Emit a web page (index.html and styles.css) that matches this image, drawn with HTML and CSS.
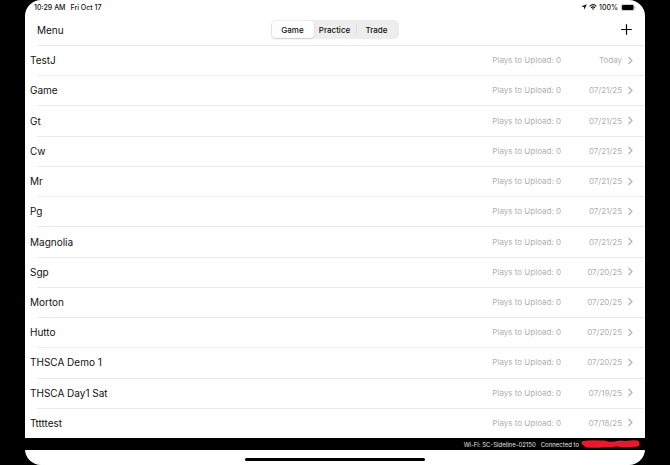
FILE: index.html
```html
<!DOCTYPE html>
<html lang="en">
  <head>
    <meta charset="UTF-8" />
    <meta name="viewport" content="width=device-width, initial-scale=1.0" />
    <title>Games</title>
    <link rel="stylesheet" href="styles.css">
  </head>
  <body>
    <svg class="sprite" width="0" height="0" aria-hidden="true">
      <symbol id="chevron" viewBox="0 0 6 9">
        <path d="M1.5 1 L5 4.5 L1.5 8" fill="none" stroke="currentColor" stroke-width="1.2" />
      </symbol>
    </svg>

    <div class="screen">
      <div class="status-bar">
        <span>10:29 AM</span>
        <span>Fri Oct 17</span>
        <div class="status-icons">
          <svg width="6" height="6" viewBox="0 0 6 6"><path d="M5.8 0.2 L3.4 5.8 L3 3 L0.2 2.6 Z" fill="#111" /></svg>
          <svg width="8" height="6" viewBox="0 0 8 6">
            <path d="M0.6 2.3 Q4 -0.9 7.4 2.3 M2 3.8 Q4 1.9 6 3.8" fill="none" stroke="#111" stroke-width="1.1" />
            <path d="M2.9 4.7 Q4 3.8 5.1 4.7 L4 5.9 Z" fill="#111" />
          </svg>
          <span>100%</span>
          <svg class="battery" width="15" height="7" viewBox="0 0 15 7">
            <rect x="0.3" y="0.3" width="12.9" height="6.4" rx="1.8" fill="none" stroke="#999" stroke-width="0.6" />
            <rect x="1" y="1" width="11.5" height="5" rx="1.2" fill="#000" />
            <path d="M14 2.4 Q15 3.5 14 4.6 Z" fill="#999" />
          </svg>
        </div>
      </div>

      <header class="nav-bar">
        <button class="menu-button" type="button">Menu</button>
        <div class="segments">
          <button class="segment selected" type="button" aria-pressed="true">Game</button>
          <button class="segment" type="button" aria-pressed="false">Practice</button>
          <button class="segment divided" type="button" aria-pressed="false">Trade</button>
        </div>
        <button class="add-button" type="button" aria-label="Add">
          <svg width="11" height="11" viewBox="0 0 11 11"><path d="M5.5 0.2 V10.8 M0.2 5.5 H10.8" stroke="#000" stroke-width="1.2" /></svg>
        </button>
      </header>

      <main class="game-list">
        <a class="game" href="#"><span class="name">TestJ</span><span class="plays">Plays to Upload: 0</span><span class="date">Today</span><svg class="chevron"><use href="#chevron" /></svg></a>
        <a class="game" href="#"><span class="name">Game</span><span class="plays">Plays to Upload: 0</span><span class="date">07/21/25</span><svg class="chevron"><use href="#chevron" /></svg></a>
        <a class="game" href="#"><span class="name">Gt</span><span class="plays">Plays to Upload: 0</span><span class="date">07/21/25</span><svg class="chevron"><use href="#chevron" /></svg></a>
        <a class="game" href="#"><span class="name">Cw</span><span class="plays">Plays to Upload: 0</span><span class="date">07/21/25</span><svg class="chevron"><use href="#chevron" /></svg></a>
        <a class="game" href="#"><span class="name">Mr</span><span class="plays">Plays to Upload: 0</span><span class="date">07/21/25</span><svg class="chevron"><use href="#chevron" /></svg></a>
        <a class="game" href="#"><span class="name">Pg</span><span class="plays">Plays to Upload: 0</span><span class="date">07/21/25</span><svg class="chevron"><use href="#chevron" /></svg></a>
        <a class="game" href="#"><span class="name">Magnolia</span><span class="plays">Plays to Upload: 0</span><span class="date">07/21/25</span><svg class="chevron"><use href="#chevron" /></svg></a>
        <a class="game" href="#"><span class="name">Sgp</span><span class="plays">Plays to Upload: 0</span><span class="date">07/20/25</span><svg class="chevron"><use href="#chevron" /></svg></a>
        <a class="game" href="#"><span class="name">Morton</span><span class="plays">Plays to Upload: 0</span><span class="date">07/20/25</span><svg class="chevron"><use href="#chevron" /></svg></a>
        <a class="game" href="#"><span class="name">Hutto</span><span class="plays">Plays to Upload: 0</span><span class="date">07/20/25</span><svg class="chevron"><use href="#chevron" /></svg></a>
        <a class="game" href="#"><span class="name">THSCA Demo 1</span><span class="plays">Plays to Upload: 0</span><span class="date">07/20/25</span><svg class="chevron"><use href="#chevron" /></svg></a>
        <a class="game" href="#"><span class="name">THSCA Day1 Sat</span><span class="plays">Plays to Upload: 0</span><span class="date">07/19/25</span><svg class="chevron"><use href="#chevron" /></svg></a>
        <a class="game" href="#"><span class="name">Tttttest</span><span class="plays">Plays to Upload: 0</span><span class="date">07/18/25</span><svg class="chevron"><use href="#chevron" /></svg></a>
      </main>

      <footer class="connection">
        <span>Wi-Fi: SC-Sideline-02150</span>
        <span>Connected to</span>
        <svg class="redacted" width="59" height="8" viewBox="0 0 59 8">
          <path d="M2 1 Q10 -0.3 20 0.6 Q25 0 27 1.6 Q33 2.2 36 1 Q40 0.2 44 1 Q50 0 57 0.4 Q59.5 3 58 6 Q54 7.6 46 6.9 Q42 7.6 36 6.6 Q32 7 24 7.3 Q14 8.2 6 7.5 Q3 7 3 5.6 Q-0.5 4 0.4 2 Z" fill="#e8192c" />
        </svg>
      </footer>
      <div class="home-area"><div class="home-bar"></div></div>
    </div>
  </body>
</html>
```
FILE: styles.css
```css
* {
  box-sizing: border-box;
}
body {
  margin: 0;
  padding: 0 25px;
  background: #000;
  color: #111;
  font-family: Inter, "Liberation Sans", sans-serif;
  font-size: 10px;
}
button {
  padding: 0;
  border: 0;
  background: none;
  color: inherit;
  font: inherit;
}
.sprite {
  position: absolute;
}
.screen {
  display: flex;
  flex-direction: column;
  min-height: 100vh;
  border-radius: 16px;
  background: #fff;
  overflow: hidden;
}
.status-bar {
  display: flex;
  align-items: center;
  gap: 5px;
  height: 14px;
  padding: 0 9px;
  font-size: 7px;
  font-weight: 500;
}
.status-icons {
  display: flex;
  align-items: center;
  gap: 2px;
  margin-left: auto;
}
.battery {
  margin-left: 1px;
}
.nav-bar {
  display: grid;
  grid-template-columns: 1fr auto 1fr;
  align-items: center;
  height: 31px;
  padding: 0 13px 0 12px;
}
.menu-button {
  justify-self: start;
}
.add-button {
  display: flex;
  justify-self: end;
}
.segments {
  display: grid;
  grid-template-columns: repeat(3, 1fr);
  width: 128px;
  height: 19px;
  padding: 1px;
  border-radius: 5px;
  background: #ededee;
  font-size: 8px;
  font-weight: 500;
}
.segment {
  border-radius: 4px;
}
.segment.selected {
  background: #fff;
  box-shadow: 0 1px 2px rgba(0, 0, 0, 0.15);
}
.segment.divided {
  background: linear-gradient(#dcdcde, #dcdcde) no-repeat left center / 1px 11px;
}
.game-list {
  display: flex;
  flex: 1;
  flex-direction: column;
}
.game {
  display: flex;
  flex: 1;
  align-items: center;
  padding: 0 12px 0 5px;
  background: linear-gradient(#ebebeb, #ebebeb) no-repeat 12px 0 / 100% 1px;
  color: inherit;
  text-decoration: none;
}
.name {
  flex: 1;
}
.plays,
.date {
  color: #b0b0b0;
  font-size: 8px;
}
.date {
  width: 61px;
  text-align: right;
}
.chevron {
  width: 6px;
  height: 9px;
  margin-left: 5px;
  color: #b0b0b0;
}
.connection {
  display: flex;
  align-items: center;
  justify-content: flex-end;
  height: 12px;
  padding-right: 5px;
  background: #000;
  color: #e4e4e4;
  font-size: 6px;
}
.connection span {
  margin-left: 5px;
}
.redacted {
  margin-left: 2px;
}
.home-area {
  display: flex;
  align-items: center;
  justify-content: center;
  height: 15px;
  padding-top: 3px;
}
.home-bar {
  width: 29%;
  height: 3px;
  border-radius: 2px;
  background: #000;
}
```
